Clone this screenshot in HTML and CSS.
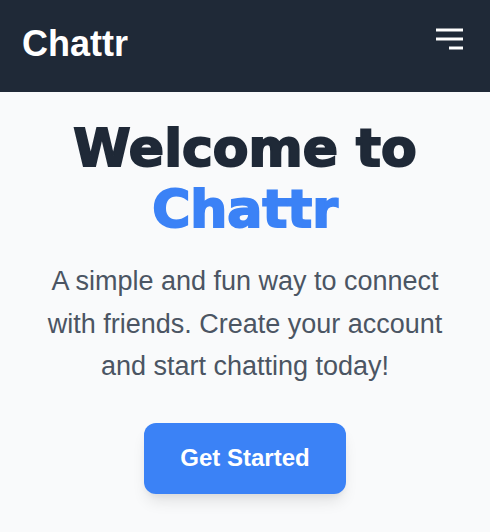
FILE: index.html
```html
<!DOCTYPE html>
<html lang="en">
<head>
<meta charset="utf-8">
<title>Chattr</title>
<link rel="stylesheet" href="styles.css">
</head>
<body>
<header class="topbar">
  <div class="brand">Chattr</div>
  <button class="menu-btn" aria-label="Menu">
    <svg width="30" height="40" viewBox="0 0 30 40" aria-hidden="true">
      <line x1="1" y1="3" x2="28" y2="3" stroke="#ffffff" stroke-width="3"/>
      <line x1="1" y1="12" x2="28" y2="12" stroke="#ffffff" stroke-width="3"/>
      <line x1="14" y1="21" x2="28" y2="21" stroke="#ffffff" stroke-width="3"/>
    </svg>
  </button>
</header>
<main class="hero">
  <h1 class="hero-title">Welcome to <span class="accent">Chattr</span></h1>
  <p class="hero-text">A simple and fun way to connect with friends. Create your account and start chatting today!</p>
  <a class="cta" href="#">Get Started</a>
</main>
</body>
</html>
```

FILE: styles.css
```css
* { box-sizing: border-box; }
html, body { margin: 0; padding: 0; }
body {
  background: #f9fafb;
  font-family: "Liberation Sans", Arial, sans-serif;
  width: 490px;
  height: 532px;
  overflow: hidden;
}
.topbar {
  height: 92px;
  background: #1f2937;
  display: flex;
  align-items: center;
  justify-content: space-between;
  padding: 0 25px 0 22px;
}
.brand {
  color: #ffffff;
  font-weight: 700;
  font-size: 36px;
  margin-bottom: 5px;
}
.menu-btn {
  background: none;
  border: 0;
  padding: 0;
  display: flex;
  margin-top: 2px;
}
.hero {
  display: flex;
  flex-direction: column;
  align-items: center;
  text-align: center;
  padding: 26px 24px 0;
}
.hero-title {
  margin: 0;
  font-family: "DejaVu Sans", sans-serif;
  font-weight: 700;
  font-size: 52px;
  line-height: 60.5px;
  color: #1f2937;
  -webkit-text-stroke: 2px currentColor;
  width: 390px;
}
.accent { color: #3b82f6; }
.hero-text {
  margin: 21px 0 0;
  max-width: 420px;
  font-size: 27px;
  line-height: 42.5px;
  color: #4b5563;
}
.cta {
  margin-top: 35px;
  display: inline-block;
  background: #3b82f6;
  color: #ffffff;
  text-decoration: none;
  font-weight: 700;
  font-size: 24px;
  line-height: 31px;
  padding: 19px 36px 21px;
  border-radius: 12px;
  box-shadow: 0 10px 15px -3px rgba(0,0,0,0.1), 0 4px 6px -2px rgba(0,0,0,0.05);
}
```
